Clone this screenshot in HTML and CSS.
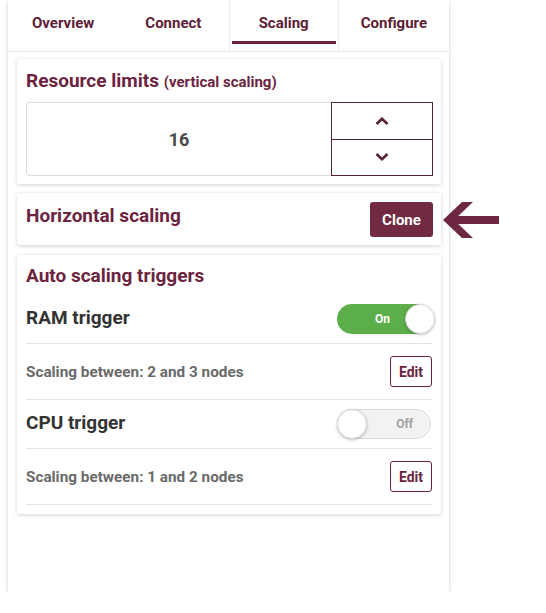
FILE: index.html
```html
<!DOCTYPE html>
<html lang="en">
<head>
<meta charset="utf-8">
<title>Scaling</title>
<link rel="stylesheet" href="styles.css">
</head>
<body>
<div class="panel">
  <nav class="tabs">
    <div class="tab"><span class="tab-label">Overview</span></div>
    <div class="tab"><span class="tab-label">Connect</span></div>
    <div class="tab tab-active"><span class="tab-label">Scaling</span></div>
    <div class="tab"><span class="tab-label">Configure</span></div>
  </nav>

  <section class="card card-resource">
    <h2 class="card-title">Resource limits <small>(vertical scaling)</small></h2>
    <div class="stepper">
      <div class="stepper-value">16</div>
      <div class="stepper-buttons">
        <button class="stepper-btn" type="button" aria-label="Increase">
          <svg width="14" height="8" viewBox="0 0 14 8"><path d="M1.5 7 L7 1.8 L12.5 7" fill="none" stroke="#5a2036" stroke-width="2.6"/></svg>
        </button>
        <button class="stepper-btn" type="button" aria-label="Decrease">
          <svg width="14" height="8" viewBox="0 0 14 8"><path d="M1.5 1 L7 6.2 L12.5 1" fill="none" stroke="#5a2036" stroke-width="2.6"/></svg>
        </button>
      </div>
    </div>
  </section>

  <section class="card card-horizontal">
    <h2 class="card-title">Horizontal scaling</h2>
    <button class="btn-clone" type="button">Clone</button>
    <svg class="callout-arrow" width="56" height="38" viewBox="0 0 56 38">
      <polygon points="0,19 19,1 30,1 11,19 30,37 19,37" fill="#6e2742"/>
      <rect x="8" y="15" width="48" height="8" fill="#6e2742"/>
    </svg>
  </section>

  <section class="card card-triggers">
    <h2 class="card-title">Auto scaling triggers</h2>
    <div class="trigger-row trigger-first">
      <span class="trigger-name">RAM trigger</span>
      <div class="toggle toggle-on"><span class="toggle-text">On</span><span class="toggle-knob"></span></div>
    </div>
    <div class="range-row">
      <span class="range-text">Scaling between: 2 and 3 nodes</span>
      <button class="btn-edit" type="button">Edit</button>
    </div>
    <div class="trigger-row">
      <span class="trigger-name">CPU trigger</span>
      <div class="toggle toggle-off"><span class="toggle-knob"></span><span class="toggle-text">Off</span></div>
    </div>
    <div class="range-row">
      <span class="range-text">Scaling between: 1 and 2 nodes</span>
      <button class="btn-edit" type="button">Edit</button>
    </div>
  </section>
</div>
</body>
</html>
```

FILE: styles.css
```css
html, body {
  margin: 0;
  padding: 0;
  background: #ffffff;
}

body {
  font-family: Roboto, "Liberation Sans", Arial, sans-serif;
  font-weight: 700;
}

.panel {
  box-sizing: border-box;
  margin-left: 8px;
  width: 441px;
  height: 593px;
  padding: 0 8px 0 9px;
  background: #fff;
  box-shadow: 0 1px 4px rgba(0, 0, 0, 0.2);
}

/* Tabs */
.tabs {
  display: flex;
  margin: 0 -8px 0 -9px;
  border-bottom: 1px solid #e6e6e6;
}

.tab {
  flex: 1;
  box-sizing: border-box;
  padding: 0 2px 7px;
  border-left: 1px solid transparent;
  border-right: 1px solid transparent;
  text-align: center;
}

.tab-active {
  border-left-color: #ececec;
  border-right-color: #ececec;
}

.tab-label {
  display: block;
  padding: 13px 0 8px;
  line-height: 20px;
  font-size: 15px;
  color: #5c2037;
  border-bottom: 3px solid transparent;
}

.tab-active .tab-label {
  border-bottom-color: #6b2340;
}

/* Cards */
.card {
  background: #fff;
  border-radius: 2px;
  box-shadow: 0 1px 4px rgba(0, 0, 0, 0.18);
}

.card-title {
  margin: 0;
  font-size: 19px;
  line-height: 24px;
  font-weight: 700;
  color: #6b2340;
}

.card-title small {
  font-size: 15px;
}

.card-resource {
  margin-top: 7px;
  padding: 10px 8px 8px 9px;
}

.stepper {
  display: flex;
  margin-top: 8px;
  height: 74px;
}

.stepper-value {
  flex: 1;
  display: flex;
  align-items: center;
  justify-content: center;
  border: 1px solid #dcdcdc;
  border-right: none;
  border-radius: 4px 0 0 4px;
  font-size: 18px;
  color: #484848;
}

.stepper-buttons {
  display: flex;
  flex-direction: column;
  width: 102px;
  box-sizing: border-box;
  border: 1px solid #55203a;
}

.stepper-btn {
  flex: 1;
  display: flex;
  align-items: center;
  justify-content: center;
  margin: 0;
  padding: 0;
  border: none;
  background: #fff;
}

.stepper-btn + .stepper-btn {
  border-top: 1px solid #55203a;
}

.card-horizontal {
  position: relative;
  margin-top: 9px;
  display: flex;
  justify-content: space-between;
  align-items: flex-start;
  padding: 9px 8px 8px 9px;
}

.card-horizontal .card-title {
  margin-top: 2px;
}

.btn-clone {
  height: 35px;
  width: 63px;
  padding: 0;
  border: none;
  border-radius: 3px;
  background: #722a43;
  color: #fff;
  font-family: inherit;
  font-weight: 700;
  font-size: 15px;
}

.callout-arrow {
  position: absolute;
  left: calc(100% + 2px);
  top: 8px;
}

/* Triggers */
.card-triggers {
  margin-top: 10px;
  padding: 9px 9px 9px 9px;
}

.trigger-row {
  display: flex;
  align-items: center;
  justify-content: space-between;
  height: 48px;
  border-bottom: 1px solid #e3e3e3;
}

.trigger-first {
  margin-top: 7px;
}

.trigger-name {
  font-size: 19px;
  color: #333;
  margin-top: -3px;
}

.range-row {
  display: flex;
  align-items: center;
  justify-content: space-between;
  height: 55px;
  border-bottom: 1px solid #e3e3e3;
}

.range-text {
  font-size: 15.3px;
  color: #6a6a6a;
}

.btn-edit {
  width: 42px;
  height: 31px;
  padding: 0;
  border: 1px solid #6b2340;
  border-radius: 3px;
  background: #fff;
  color: #6b2340;
  font-family: inherit;
  font-weight: 700;
  font-size: 14px;
}

.toggle {
  box-sizing: border-box;
  width: 94px;
  height: 30px;
  border-radius: 15px;
  display: flex;
  align-items: center;
  margin-right: 1px;
}

.toggle-on {
  background: #5cae4a;
  justify-content: flex-end;
}

.toggle-on .toggle-text {
  color: #fff;
  margin-right: 15px;
}

.toggle-on .toggle-knob {
  margin-right: -4px;
}

.toggle-off {
  background: #f2f2f2;
  border: 1px solid #dddddd;
  justify-content: space-between;
}

.toggle-off .toggle-text {
  color: #a0a0a0;
  margin-right: 17px;
}

.toggle-off .toggle-knob {
  margin-left: -1px;
}

.toggle-text {
  font-size: 12px;
}

.toggle-knob {
  width: 30px;
  height: 30px;
  border-radius: 50%;
  background: #fff;
  box-sizing: border-box;
  border: 1px solid #d6d6d6;
  box-shadow: 0 1px 3px rgba(0, 0, 0, 0.25);
}
```
